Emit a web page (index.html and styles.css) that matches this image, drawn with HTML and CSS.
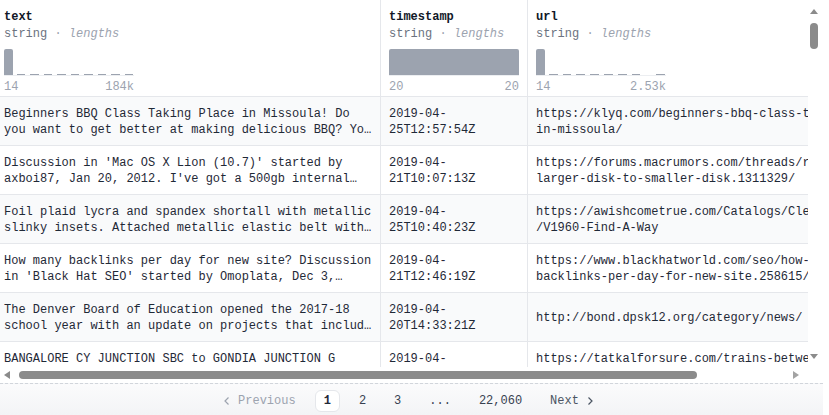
FILE: index.html
```html
<!DOCTYPE html>
<html lang="en">
<head>
<meta charset="utf-8">
<title>Dataset viewer</title>
<link rel="stylesheet" href="styles.css">
</head>
<body>
<div class="viewer">
  <div class="frame">
    <div class="viewport">
      <div class="table">
        <div class="hcell col-text">
          <div class="cname">text</div>
          <div class="ctype">string <span class="dot">·</span> <em>lengths</em></div>
          <div class="hist">
            <div class="bars">
              <span class="bar"></span>
              <span class="bar empty"></span><span class="bar empty"></span><span class="bar empty"></span>
              <span class="bar empty"></span><span class="bar empty"></span><span class="bar empty"></span>
              <span class="bar empty"></span><span class="bar empty"></span><span class="bar empty"></span>
            </div>
            <div class="range"><span>14</span><span>184k</span></div>
          </div>
        </div>
        <div class="hcell col-ts">
          <div class="cname">timestamp</div>
          <div class="ctype">string <span class="dot">·</span> <em>lengths</em></div>
          <div class="hist">
            <div class="bars">
              <span class="bar"></span>
            </div>
            <div class="range"><span>20</span><span>20</span></div>
          </div>
        </div>
        <div class="hcell col-url">
          <div class="cname">url</div>
          <div class="ctype">string <span class="dot">·</span> <em>lengths</em></div>
          <div class="hist">
            <div class="bars">
              <span class="bar"></span>
              <span class="bar empty"></span><span class="bar empty"></span><span class="bar empty"></span>
              <span class="bar empty"></span><span class="bar empty"></span><span class="bar empty"></span>
              <span class="bar empty"></span><span class="bar none"></span><span class="bar empty"></span>
            </div>
            <div class="range"><span>14</span><span>2.53k</span></div>
          </div>
        </div>

        <div class="cell col-text odd"><div class="clamp">Beginners BBQ Class Taking Place in Missoula! Do you want to get better at making delicious BBQ? You will have the opportunity, put this on your calendar now.</div></div>
        <div class="cell col-ts odd"><div class="clamp">2019-04-25T12:57:54Z</div></div>
        <div class="cell col-url odd"><div class="clamp">https://klyq.com/beginners-bbq-class-taking-place-in-missoula/</div></div>

        <div class="cell col-text"><div class="clamp">Discussion in 'Mac OS X Lion (10.7)' started by axboi87, Jan 20, 2012. I've got a 500gb internal drive and a 240gb SSD.</div></div>
        <div class="cell col-ts"><div class="clamp">2019-04-21T10:07:13Z</div></div>
        <div class="cell col-url"><div class="clamp">https://forums.macrumors.com/threads/restore-from-larger-disk-to-smaller-disk.1311329/</div></div>

        <div class="cell col-text odd"><div class="clamp">Foil plaid lycra and spandex shortall with metallic slinky insets. Attached metallic elastic belt with O-ring. Headband included.</div></div>
        <div class="cell col-ts odd"><div class="clamp">2019-04-25T10:40:23Z</div></div>
        <div class="cell col-url odd"><div class="clamp">https://awishcometrue.com/Catalogs/Clearance/Tops<wbr>/V1960-Find-A-Way</div></div>

        <div class="cell col-text"><div class="clamp">How many backlinks per day for new site? Discussion in 'Black Hat SEO' started by Omoplata, Dec 3, 2010. 1) for a newly created site, what's the max backlinks per day I should do to be safe?</div></div>
        <div class="cell col-ts"><div class="clamp">2019-04-21T12:46:19Z</div></div>
        <div class="cell col-url"><div class="clamp">https://www.blackhatworld.com/seo/how-many-backlinks-per-day-for-new-site.258615/</div></div>

        <div class="cell col-text odd"><div class="clamp">The Denver Board of Education opened the 2017-18 school year with an update on projects that include new construction, upgrades, heat mitigation and quality learning environments.</div></div>
        <div class="cell col-ts odd"><div class="clamp">2019-04-20T14:33:21Z</div></div>
        <div class="cell col-url odd"><div class="clamp">http://bond.dpsk12.org/category/news/</div></div>

        <div class="cell col-text"><div class="clamp">BANGALORE CY JUNCTION SBC to GONDIA JUNCTION G Trains Timings and Availability</div></div>
        <div class="cell col-ts"><div class="clamp">2019-04-24T19:55:54Z</div></div>
        <div class="cell col-url"><div class="clamp">https://tatkalforsure.com/trains-between-stations/sbc-to-g/</div></div>
      </div>
    </div>
    <div class="vscroll">
      <span class="arrow-up"></span>
      <span class="vthumb"></span>
      <span class="fill"></span>
      <span class="arrow-down"></span>
    </div>
    <div class="hscroll">
      <span class="arrow-left"></span>
      <span class="hthumb"></span>
      <span class="fill"></span>
      <span class="arrow-right"></span>
    </div>
    <div class="corner"></div>
  </div>
  <nav class="pager">
    <span class="pitem prev"><svg width="8" height="10" viewBox="0 0 8 10"><path d="M5.5 1.5 L2 5 L5.5 8.5" fill="none" stroke="currentColor" stroke-width="1.2"/></svg>Previous</span>
    <span class="pitem current">1</span>
    <span class="pitem">2</span>
    <span class="pitem">3</span>
    <span class="pitem">...</span>
    <span class="pitem">22,060</span>
    <span class="pitem next">Next<svg width="8" height="10" viewBox="0 0 8 10"><path d="M2.5 1.5 L6 5 L2.5 8.5" fill="none" stroke="currentColor" stroke-width="1.2"/></svg></span>
  </nav>
</div>
</body>
</html>
```
FILE: styles.css
```css
* { box-sizing: border-box; }
html, body { margin: 0; padding: 0; background: #fff; }
body {
  font-family: "Liberation Mono", "DejaVu Sans Mono", monospace;
  font-size: 12px;
  line-height: 16px;
  color: #1f2937;
}
.viewer { width: 823px; }
.frame {
  display: grid;
  grid-template-columns: 808px 15px;
  grid-template-rows: 367px 16px;
}
.viewport { overflow: hidden; }
.table {
  display: grid;
  grid-template-columns: 385px 147px 430px;
  margin-left: -4px;
}
.hcell {
  background: #fff;
  border-right: 1px solid #e5e7eb;
  border-bottom: 1px solid #e5e7eb;
  padding: 9px 6px 0 8px;
  height: 97px;
}
.cname { font-weight: bold; color: #111827; }
.ctype { color: #6b7280; margin-top: 1px; }
.ctype .dot { color: #9ca3af; }
.ctype em { color: #9ca3af; font-style: italic; }
.hist { width: 130px; margin-top: 7px; }
.bars {
  display: flex;
  gap: 2px;
  height: 27px;
  align-items: flex-end;
  border-bottom: 1px solid #eceef1;
}
.bar {
  flex: 1;
  height: 26px;
  background: #9ca3af;
  border-radius: 2px 2px 0 0;
}
.bar.empty { height: 1px; margin: 0 1px 0 2px; border-radius: 0; }
.bar.none { height: 0; }
.range {
  display: flex;
  justify-content: space-between;
  color: #9ca3af;
  margin-top: 3px;
}
.cell {
  display: flex;
  align-items: center;
  height: 49px;
  padding: 2px 6px 0 8px;
  border-right: 1px solid #e5e7eb;
  border-bottom: 1px solid #e5e7eb;
  background: #fff;
}
.cell.odd { background: #f9fafb; }
.col-ts { padding-right: 8px; }
.clamp {
  display: -webkit-box;
  -webkit-line-clamp: 2;
  -webkit-box-orient: vertical;
  overflow: hidden;
  overflow-wrap: anywhere;
  width: 100%;
}
.col-url .clamp { width: 372px; }

.vscroll {
  display: flex;
  flex-direction: column;
  padding: 9px 0 8px 2px;
  background: #fff;
}
.arrow-up {
  width: 0; height: 0;
  border-left: 4px solid transparent;
  border-right: 4px solid transparent;
  border-bottom: 5px solid #8b8b8b;
}
.vthumb {
  margin-top: 9px;
  width: 8px;
  height: 26px;
  border-radius: 4px;
  background: #8b8b8b;
}
.fill { flex: 1; }
.arrow-down {
  width: 0; height: 0;
  border-left: 4px solid transparent;
  border-right: 4px solid transparent;
  border-top: 5px solid #8b8b8b;
}
.hscroll {
  display: flex;
  align-items: center;
  padding: 0 9px 0 4px;
  background: #fff;
}
.arrow-left {
  width: 0; height: 0;
  border-top: 4px solid transparent;
  border-bottom: 4px solid transparent;
  border-right: 6px solid #8b8b8b;
}
.hthumb {
  margin-left: 9px;
  width: 678px;
  height: 8px;
  border-radius: 4px;
  background: #8b8b8b;
}
.arrow-right {
  width: 0; height: 0;
  border-top: 4px solid transparent;
  border-bottom: 4px solid transparent;
  border-left: 6px solid #a3a3a3;
}
.corner { background: #fff; }

.pager {
  display: flex;
  justify-content: center;
  gap: 10px;
  height: 32px;
  padding: 6px 6px 0 0;
  border-top: 1px dashed #d1d5db;
  background: linear-gradient(to bottom, #fbfbfc, #f3f4f6);
}
.pitem {
  display: flex;
  align-items: center;
  gap: 7px;
  height: 22px;
  padding: 0 8px;
  border: 1px solid transparent;
  border-radius: 6px;
  color: #374151;
}
.pitem.current {
  border-color: #e5e7eb;
  background: #fff;
  font-weight: bold;
  color: #1f2937;
}
.pitem.prev { color: #9ca3af; }
.pitem.next { color: #4b5563; }
```
